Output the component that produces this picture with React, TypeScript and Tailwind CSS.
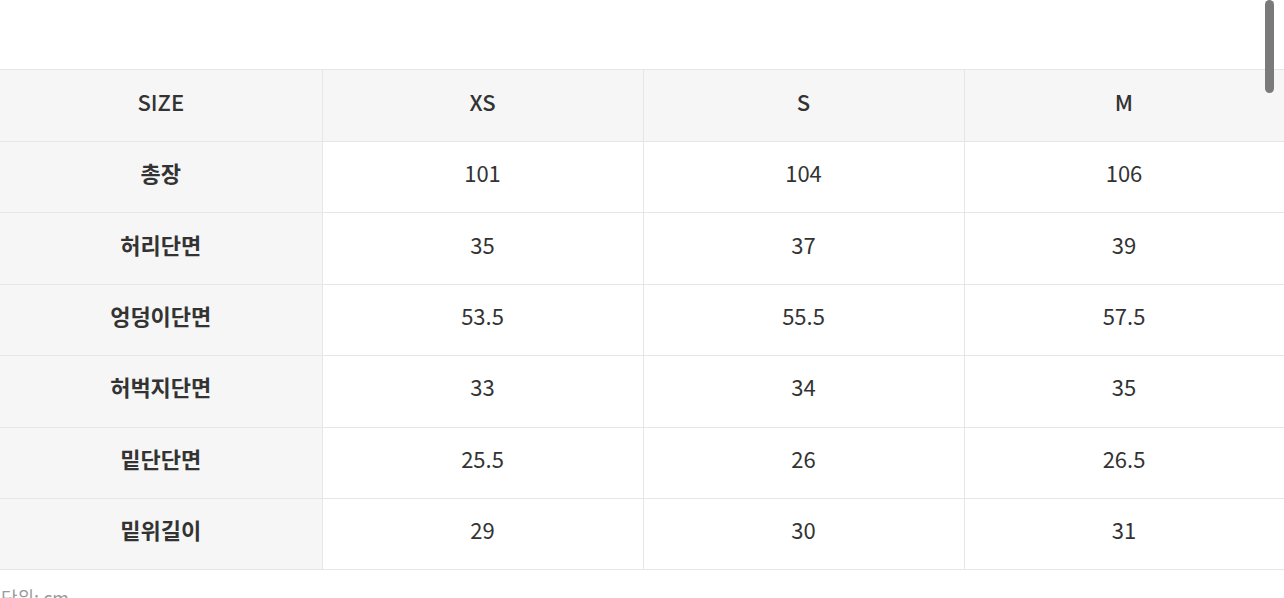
import React from 'react';

const rows: { label: string; values: string[] }[] = [
  { label: '총장', values: ['101', '104', '106'] },
  { label: '허리단면', values: ['35', '37', '39'] },
  { label: '엉덩이단면', values: ['53.5', '55.5', '57.5'] },
  { label: '허벅지단면', values: ['33', '34', '35'] },
  { label: '밑단단면', values: ['25.5', '26', '26.5'] },
  { label: '밑위길이', values: ['29', '30', '31'] },
];

const sizes = ['XS', 'S', 'M'];

export default function App() {
  return (
    <div
      className="relative w-[1284px] h-[598px] overflow-hidden bg-white text-[#333]"
      style={{ fontFamily: '"Noto Sans CJK KR", "Noto Sans", sans-serif' }}
    >
      <div className="h-[69px]" />
      <table className="w-[1284px] table-fixed border-collapse text-[22px] leading-none">
        <colgroup>
          <col className="w-[322px]" />
          <col className="w-[321px]" />
          <col className="w-[321px]" />
          <col className="w-[320px]" />
        </colgroup>
        <tbody>
          <tr className="h-[72px] bg-[#f6f6f6]">
            <th className="border border-l-0 border-[#e6e6e6] pb-[10px] font-medium">SIZE</th>
            {sizes.map((s) => (
              <th key={s} className="border border-[#e6e6e6] pb-[10px] font-medium">
                {s}
              </th>
            ))}
          </tr>
          {rows.map((r) => (
            <tr key={r.label} className="h-[71.4px]">
              <th className="border border-l-0 border-[#e6e6e6] bg-[#f6f6f6] pb-[10px] font-bold">{r.label}</th>
              {r.values.map((v, i) => (
                <td key={i} className="border border-[#e6e6e6] pb-[10px] text-center font-normal">
                  {v}
                </td>
              ))}
            </tr>
          ))}
        </tbody>
      </table>
      <p className="mt-[18px] pl-[1px] text-[18px] leading-none text-[#9a9a9a]">단위: cm</p>
      <div className="absolute right-[10px] top-0 h-[93px] w-[9px] rounded-full bg-[#7a7a7a]" />
    </div>
  );
}
